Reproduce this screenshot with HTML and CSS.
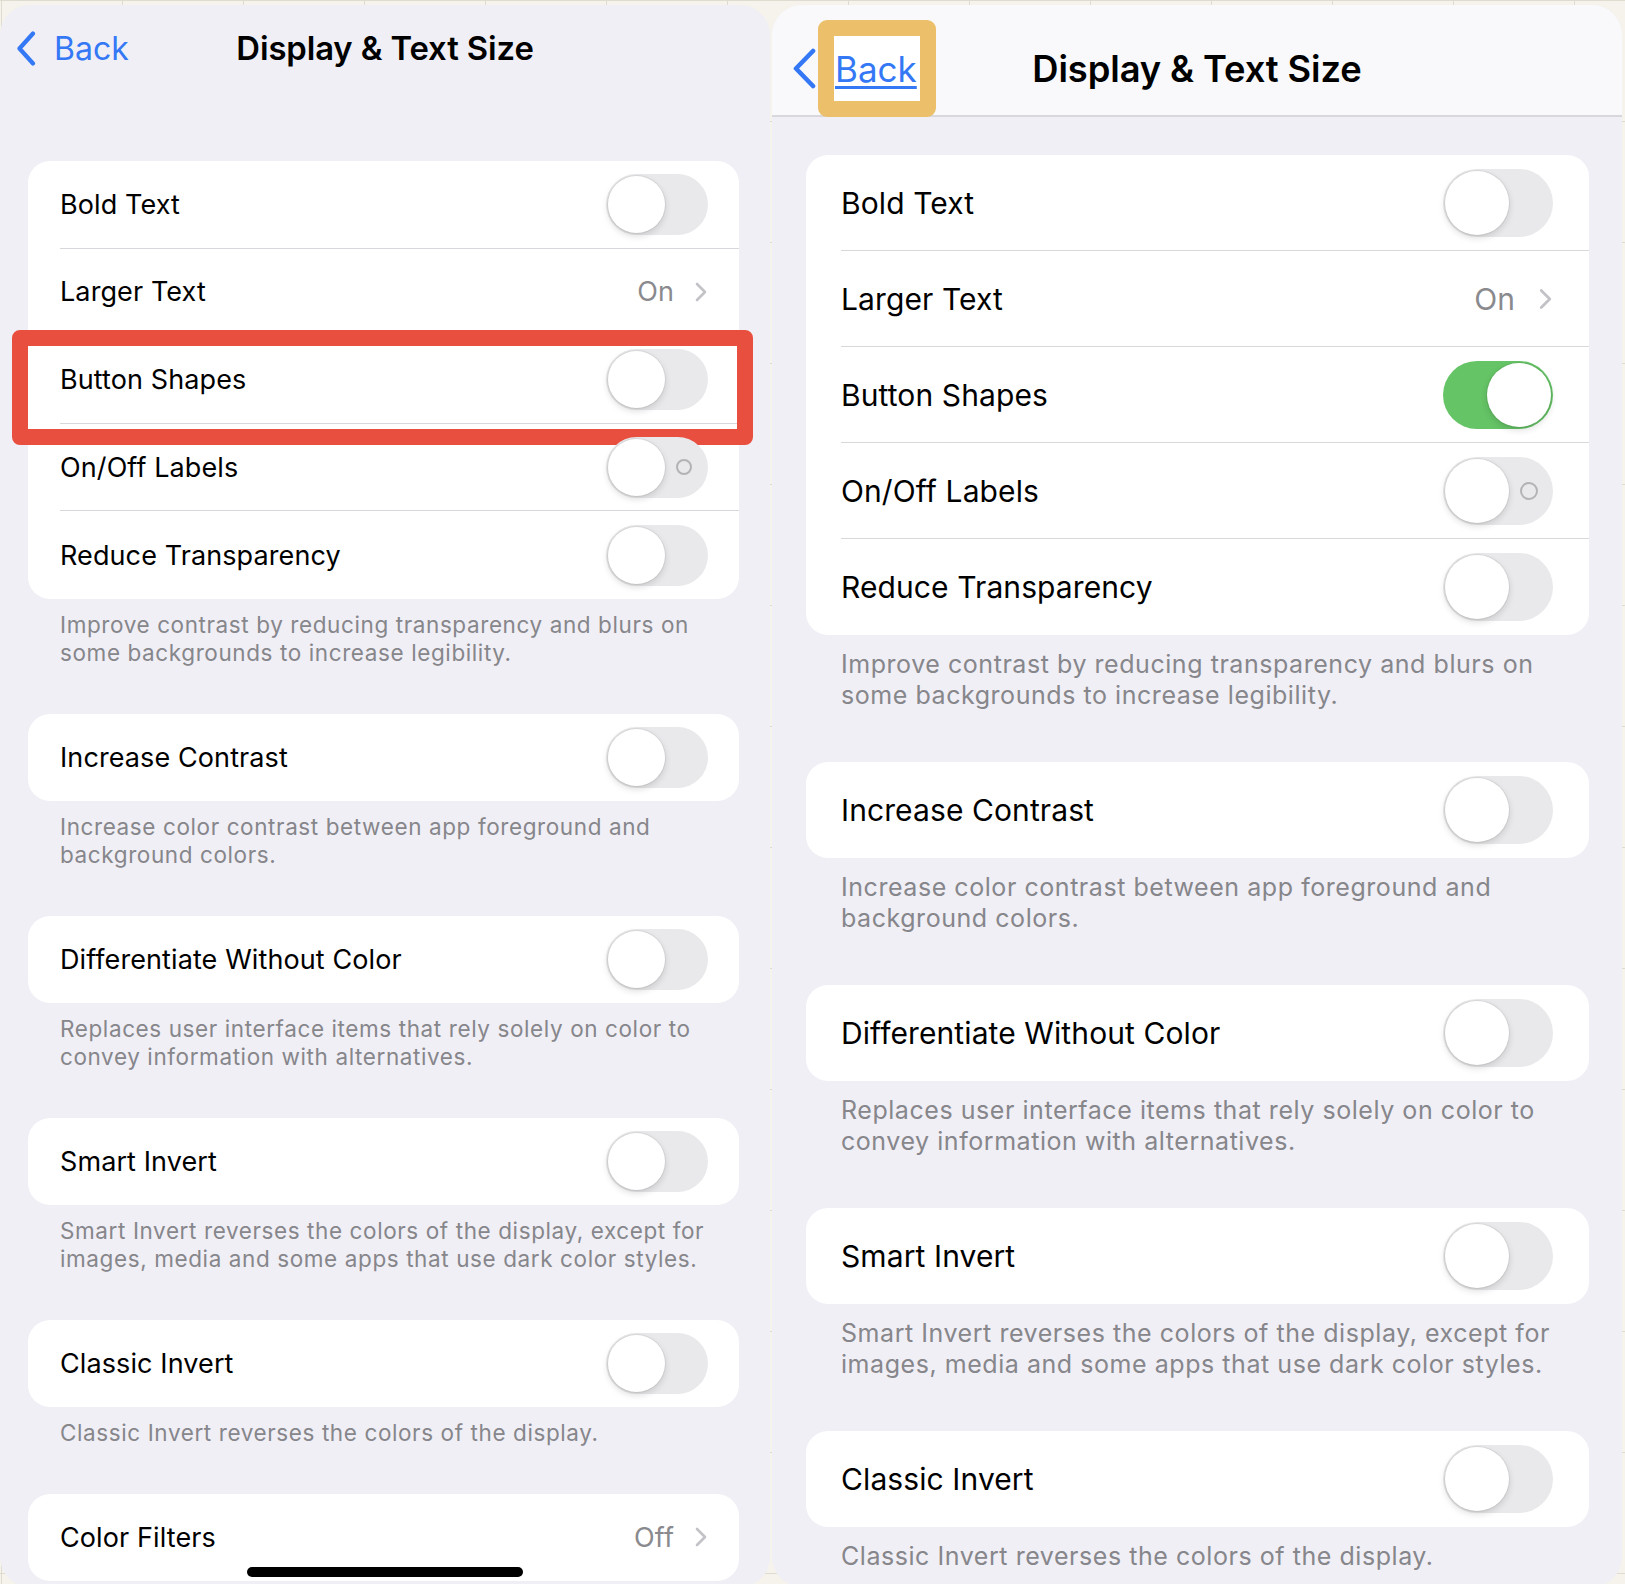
FILE: index.html
```html
<!DOCTYPE html>
<html lang="en">
<head>
<meta charset="utf-8">
<title>Display &amp; Text Size</title>
<link rel="stylesheet" href="styles.css">
</head>
<body>
<div class="screen screen--small">
  <header class="nav">
    <a class="nav-back">
      <svg class="chev-back" viewBox="0 0 20 35"><polyline points="17,2.5 3.5,17.5 17,32.5"/></svg>
      <span class="back-label">Back</span>
    </a>
    <h1 class="nav-title">Display &amp; Text Size</h1>
    <span></span>
  </header>
  <main class="content">
    <section class="group">
      <div class="card card--multi">
        <div class="row"><div class="row-inner"><span class="label">Bold Text</span><span class="switch"><span class="knob"></span></span></div></div>
        <div class="row"><div class="row-inner"><span class="label">Larger Text</span><span class="detail">On<svg class="chev" viewBox="0 0 14 22"><polyline points="3,3 11,11 3,19"/></svg></span></div></div>
        <div class="row row--marked"><div class="row-inner"><span class="label">Button Shapes</span><span class="switch"><span class="knob"></span></span></div><span class="mark mark--red"></span></div>
        <div class="row"><div class="row-inner"><span class="label">On/Off Labels</span><span class="switch switch--labels"><span class="knob"></span><span class="off-label"></span></span></div></div>
        <div class="row"><div class="row-inner"><span class="label">Reduce Transparency</span><span class="switch"><span class="knob"></span></span></div></div>
      </div>
      <p class="footer">Improve contrast by reducing transparency and blurs on<br>some backgrounds to increase legibility.</p>
    </section>
    <section class="group">
      <div class="card">
        <div class="row"><div class="row-inner"><span class="label">Increase Contrast</span><span class="switch"><span class="knob"></span></span></div></div>
      </div>
      <p class="footer">Increase color contrast between app foreground and<br>background colors.</p>
    </section>
    <section class="group">
      <div class="card">
        <div class="row"><div class="row-inner"><span class="label">Differentiate Without Color</span><span class="switch"><span class="knob"></span></span></div></div>
      </div>
      <p class="footer">Replaces user interface items that rely solely on color to<br>convey information with alternatives.</p>
    </section>
    <section class="group">
      <div class="card">
        <div class="row"><div class="row-inner"><span class="label">Smart Invert</span><span class="switch"><span class="knob"></span></span></div></div>
      </div>
      <p class="footer">Smart Invert reverses the colors of the display, except for<br>images, media and some apps that use dark color styles.</p>
    </section>
    <section class="group">
      <div class="card">
        <div class="row"><div class="row-inner"><span class="label">Classic Invert</span><span class="switch"><span class="knob"></span></span></div></div>
      </div>
      <p class="footer">Classic Invert reverses the colors of the display.</p>
    </section>
    <section class="group">
      <div class="card">
        <div class="row"><div class="row-inner"><span class="label">Color Filters</span><span class="detail">Off<svg class="chev" viewBox="0 0 14 22"><polyline points="3,3 11,11 3,19"/></svg></span></div></div>
      </div>
    </section>
  </main>
  <span class="home-indicator"></span>
</div>

<div class="screen screen--large">
  <header class="nav">
    <a class="nav-back">
      <svg class="chev-back" viewBox="0 0 26 41"><polyline points="22,3 5,20.5 22,38"/></svg>
      <span class="back-label back-label--marked">Back<span class="mark mark--orange"></span></span>
    </a>
    <h1 class="nav-title">Display &amp; Text Size</h1>
    <span></span>
  </header>
  <main class="content">
    <section class="group">
      <div class="card card--multi">
        <div class="row"><div class="row-inner"><span class="label">Bold Text</span><span class="switch"><span class="knob"></span></span></div></div>
        <div class="row"><div class="row-inner"><span class="label">Larger Text</span><span class="detail">On<svg class="chev" viewBox="0 0 14 22"><polyline points="3,3 11,11 3,19"/></svg></span></div></div>
        <div class="row"><div class="row-inner"><span class="label">Button Shapes</span><span class="switch switch--on"><span class="knob"></span></span></div></div>
        <div class="row"><div class="row-inner"><span class="label">On/Off Labels</span><span class="switch switch--labels"><span class="knob"></span><span class="off-label"></span></span></div></div>
        <div class="row"><div class="row-inner"><span class="label">Reduce Transparency</span><span class="switch"><span class="knob"></span></span></div></div>
      </div>
      <p class="footer">Improve contrast by reducing transparency and blurs on<br>some backgrounds to increase legibility.</p>
    </section>
    <section class="group">
      <div class="card">
        <div class="row"><div class="row-inner"><span class="label">Increase Contrast</span><span class="switch"><span class="knob"></span></span></div></div>
      </div>
      <p class="footer">Increase color contrast between app foreground and<br>background colors.</p>
    </section>
    <section class="group">
      <div class="card">
        <div class="row"><div class="row-inner"><span class="label">Differentiate Without Color</span><span class="switch"><span class="knob"></span></span></div></div>
      </div>
      <p class="footer">Replaces user interface items that rely solely on color to<br>convey information with alternatives.</p>
    </section>
    <section class="group">
      <div class="card">
        <div class="row"><div class="row-inner"><span class="label">Smart Invert</span><span class="switch"><span class="knob"></span></span></div></div>
      </div>
      <p class="footer">Smart Invert reverses the colors of the display, except for<br>images, media and some apps that use dark color styles.</p>
    </section>
    <section class="group">
      <div class="card">
        <div class="row"><div class="row-inner"><span class="label">Classic Invert</span><span class="switch"><span class="knob"></span></span></div></div>
      </div>
      <p class="footer">Classic Invert reverses the colors of the display.</p>
    </section>
  </main>
</div>
</body>
</html>
```

FILE: styles.css
```css
* { box-sizing: border-box; }

html, body { margin: 0; padding: 0; }

body {
  width: 1625px;
  height: 1584px;
  overflow: hidden;
  display: flex;
  align-items: flex-start;
  background-color: #f5f3eb;
  background-image:
    linear-gradient(to right, #dedbd0 1px, transparent 1px),
    linear-gradient(to bottom, #dedbd0 1px, transparent 1px);
  background-size: 121px 121px;
  background-position: 1px 0;
  font-family: "Inter", "Noto Sans", "Liberation Sans", sans-serif;
  color: #000;
}

.screen {
  position: relative;
  margin-top: 5px;
  height: 1582px;
  border-radius: 30px;
  background: #f0eff5;
  overflow: hidden;
  display: flex;
  flex-direction: column;
}

.screen--small { width: 770px; flex-shrink: 0; }
.screen--large { flex: 1; margin-left: 2px; margin-right: 3px; }

/* ---------- nav bar ---------- */
.nav {
  display: grid;
  grid-template-columns: 1fr auto 1fr;
  align-items: center;
  flex-shrink: 0;
}

.nav-back {
  display: flex;
  align-items: center;
  color: #3478f6;
  text-decoration: none;
}

.chev-back polyline {
  fill: none;
  stroke: #3478f6;
  stroke-linecap: round;
  stroke-linejoin: round;
}

.nav-title {
  margin: 0;
  font-weight: 600;
  letter-spacing: -0.1px;
  white-space: nowrap;
}

.screen--small .nav { height: 86px; padding: 0 16px; }
.screen--small .chev-back { width: 20px; height: 35px; margin-right: 18px; }
.screen--small .chev-back polyline { stroke-width: 4.2; }
.screen--small .back-label { font-size: 32px; }
.screen--small .nav-title { font-size: 32.8px; }

.screen--large .nav {
  height: 112px;
  padding: 17px 19px 0;
  background: #f9f9fb;
  border-bottom: 2px solid #d8d8dc;
}
.screen--large .chev-back { width: 26px; height: 41px; margin-right: 18px; }
.screen--large .chev-back polyline { stroke-width: 4.6; }
.screen--large .back-label { font-size: 35px; }
.screen--large .nav-title { font-size: 36.3px; }

.back-label--marked {
  position: relative;
  z-index: 0;
  text-decoration: underline;
  text-decoration-thickness: 3px;
  text-underline-offset: 4px;
}

/* ---------- annotations ---------- */
.mark {
  position: absolute;
  pointer-events: none;
}

.mark--orange {
  z-index: -1;
  top: -28px;
  bottom: -27px;
  left: -17px;
  right: -19px;
  border: 16px solid #ecbf6b;
  border-radius: 9px;
  background: #fff;
}

.mark--red {
  top: -6px;
  bottom: -21px;
  left: -16px;
  right: -14px;
  border: 16px solid #e94f3e;
  border-radius: 8px;
}

/* ---------- content ---------- */
.content { display: flex; flex-direction: column; }

.screen--small .content { padding: 70px 31px 0 28px; }
.screen--large .content { padding: 38px 33px 0 34px; }

.card {
  background: #fff;
  border-radius: 22px;
}

.row { position: relative; }

.row-inner {
  display: flex;
  align-items: center;
  justify-content: space-between;
  border-bottom: 1px solid #d8d8dc;
}

.row:last-child .row-inner { border-bottom: none; }

.label { white-space: nowrap; }

.screen--small .row { padding-left: 32px; }
.screen--small .row-inner { height: 87px; padding-right: 31px; }
.screen--small .card--multi .row-inner { height: 87.6px; }
.screen--small .label,
.screen--small .detail { font-size: 27px; letter-spacing: 0.1px; }

.screen--large .row { padding-left: 35px; }
.screen--large .row-inner { height: 96px; padding-right: 36px; }
.screen--large .label,
.screen--large .detail { font-size: 30px; letter-spacing: 0.1px; }

.detail {
  display: flex;
  align-items: center;
  color: #8a8a8e;
}

.chev polyline {
  fill: none;
  stroke: #c3c3c7;
  stroke-width: 2.6;
  stroke-linecap: round;
  stroke-linejoin: round;
}

.screen--small .chev { width: 14px; height: 22px; margin-left: 20px; }
.screen--large .chev { width: 15px; height: 24px; margin-left: 23px; }

/* ---------- switches ---------- */
.switch {
  display: flex;
  align-items: center;
  flex-shrink: 0;
  background: #e9e9eb;
}

.knob {
  flex-shrink: 0;
  border-radius: 50%;
  background: #fff;
  box-shadow: 0 3px 7px rgba(0, 0, 0, 0.14), 0 0 0 1px rgba(0, 0, 0, 0.06);
}

.switch--on {
  justify-content: flex-end;
  background: #65c466;
}

.off-label {
  border-radius: 50%;
  border: 2px solid #b3b3b7;
}

.screen--small .switch { width: 102px; height: 61px; border-radius: 31px; padding: 2px; }
.screen--small .knob { width: 57px; height: 57px; }
.screen--small .off-label { width: 16px; height: 16px; margin-left: 11px; }

.screen--large .switch { width: 110px; height: 68px; border-radius: 34px; padding: 2px; }
.screen--large .knob { width: 64px; height: 64px; }
.screen--large .off-label { width: 18px; height: 18px; margin-left: 11px; }

/* ---------- footers ---------- */
.footer {
  margin: 0;
  color: #86868b;
  white-space: nowrap;
}

.screen--small .footer {
  font-size: 22.5px;
  line-height: 28px;
  letter-spacing: 0.6px;
  padding: 12px 32px 47px;
}

.screen--large .footer {
  font-size: 25px;
  line-height: 31px;
  letter-spacing: 0.55px;
  padding: 14px 35px 51px;
}

/* ---------- home indicator ---------- */
.home-indicator {
  position: absolute;
  left: 50%;
  bottom: 10px;
  width: 276px;
  height: 10px;
  margin-left: -138px;
  border-radius: 5px;
  background: #000;
}
```
